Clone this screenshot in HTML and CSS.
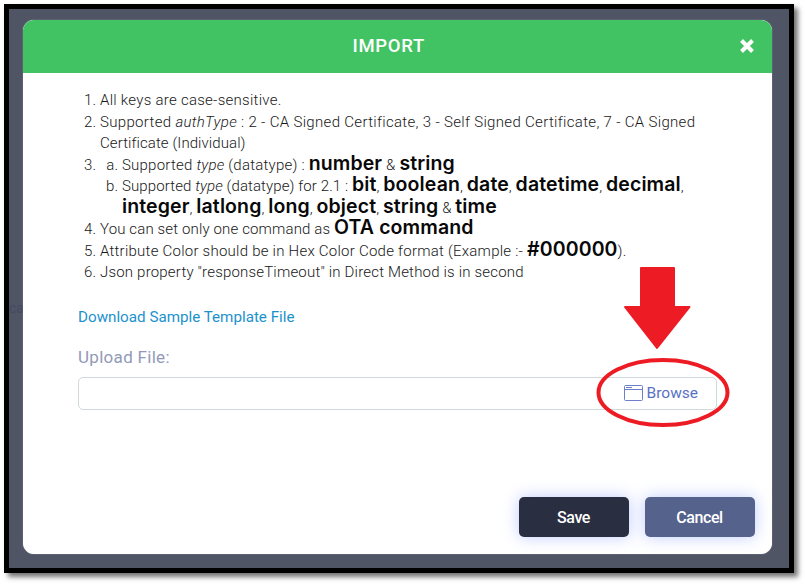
FILE: index.html
```html
<!DOCTYPE html>
<html lang="en">
<head>
<meta charset="utf-8">
<title>Import</title>
<link rel="stylesheet" href="styles.css">
</head>
<body>
<div class="frame">
  <span class="backdrop-text">ca</span>
  <div class="modal">
    <header class="modal-header">
      <h1>IMPORT</h1>
      <svg class="close" viewBox="0 0 16 16" width="16" height="16"><path d="M2.500 2.500 13.500 13.500M13.500 2.500 2.500 13.500"/></svg>
    </header>
    <div class="modal-body">
      <ol class="notes">
        <li><span class="num">1.</span><div class="l1">All keys are case-sensitive.</div></li>
        <li><span class="num">2.</span><div class="l2">Supported <i>authType</i> : 2 - CA Signed Certificate, 3 - Self Signed Certificate, 7 - CA Signed<br><span class="l3">Certificate (Individual)</span></div></li>
        <li><span class="num">3.</span>
          <ol class="sub">
            <li><span class="num">a.</span><div class="l4">Supported <i>type</i> (datatype) : <b>number</b> &amp; <b>string</b></div></li>
            <li><span class="num">b.</span><div class="l5">Supported <i>type</i> (datatype) for 2.1 : <b>bit</b>, <b>boolean</b>, <b>date</b>, <b>datetime</b>, <b>decimal</b>,<br><b>integer</b>, <b>latlong</b>, <b>long</b>, <b>object</b>, <b>string</b> &amp; <b>time</b></div></li>
          </ol>
        </li>
        <li><span class="num">4.</span><div class="l7">You can set only one command as <b>OTA command</b></div></li>
        <li><span class="num">5.</span><div class="l8">Attribute Color should be in Hex Color Code format (Example :- <b>#000000</b>).</div></li>
        <li><span class="num">6.</span><div class="l9">Json property "responseTimeout" in Direct Method is in second</div></li>
      </ol>
      <a class="download">Download Sample Template File</a>
      <label class="upload-label">Upload File:</label>
      <div class="file-input">
        <span class="browse">
          <svg viewBox="0 0 19 16" width="19" height="16"><path d="M.5 1.500q0-1 1-1h16q1 0 1 1v13q0 1-1 1h-16q-1 0-1-1zM.5 4.500h18M2 2.500h6"/></svg>
          <span>Browse</span>
        </span>
      </div>
    </div>
    <footer class="actions">
      <button class="btn save">Save</button>
      <button class="btn cancel">Cancel</button>
    </footer>
  </div>
</div>
<svg class="annotation" viewBox="0 0 140 164" width="140" height="164">
  <path class="arrow" d="M46 4h33v39h15.500L62 84 30 43h16z"/>
  <ellipse cx="68" cy="128.500" rx="64.500" ry="32.500"/>
</svg>
</body>
</html>
```
FILE: styles.css
```css
* { box-sizing: border-box; }
body { margin: 0; background: #fff; height: 584px; overflow: hidden; font-family: Roboto, sans-serif; }
.frame {
  position: relative; width: 790px; height: 569px; margin: 4px 0 0 4px;
  border: 5px solid #000; background: #505565; padding: 10.5px 0 0 14px;
  box-shadow: 4px 4px 5px rgba(0, 0, 0, .55);
}
.backdrop-text { position: absolute; left: 0; top: 291px; font-size: 14px; color: #454a5e; }
.modal {
  position: relative; width: 748.5px; height: 534.5px; background: #fff;
  border-radius: 11px; overflow: hidden; display: flex; flex-direction: column;
  box-shadow: 0 0 1px #c5c8d0;
}
.modal-header {
  height: 53.5px; flex: none; background: #41c363; color: #fff; padding: 0 17px;
  display: grid; grid-template-columns: 1fr auto 1fr; align-items: center;
}
h1 { grid-column: 2; margin: 0 17px 1px 0; font-size: 18.5px; font-weight: 500; letter-spacing: .7px; }
.close { justify-self: end; fill: none; stroke: #fff; stroke-width: 4; }
.modal-body { padding: 17px 53px 0 55px; flex: 1; display: flex; flex-direction: column; align-items: flex-start; }
ol { list-style: none; margin: 0; padding: 0; }
.notes { font-size: 15px; line-height: 21.5px; color: #181818; white-space: nowrap; font-weight: 300; }
.notes li { display: flex; }
.notes .num { width: 22px; padding-right: 4px; text-align: right; flex: none; }
.notes b { font: 600 19.5px/0 Inter, sans-serif; letter-spacing: .12px; color: #080808; }
.l1 { letter-spacing: .27px; }
.l2 { letter-spacing: .32px; }
.l3 { letter-spacing: .08px; }
.l4 { letter-spacing: .22px; }
.l5 { letter-spacing: .1px; }
.l7 { letter-spacing: .14px; }
.l8 { letter-spacing: .24px; }
.l9 { letter-spacing: .19px; }
.download { margin-top: 22px; font-size: 15.2px; line-height: 22px; color: #1b92cd; }
.upload-label { margin-top: 17px; font-size: 17px; line-height: 24px; letter-spacing: .3px; color: #929ab8; }
.file-input {
  margin-top: 8px; width: 639px; height: 33px; border: 1px solid #cfd9dc; border-radius: 5px;
  display: flex; justify-content: flex-end; align-items: center; padding: 0 18px 1px 0;
}
.browse { display: flex; align-items: center; gap: 4px; font-size: 15.5px; color: #5871c5; }
.browse svg { fill: none; stroke: #6c80c9; }
.actions { display: flex; justify-content: flex-end; gap: 16px; padding: 0 17px 17px 0; }
.btn {
  width: 110px; height: 40px; border: 0; border-radius: 5px; color: #fff; padding: 0;
  font: 500 16px Roboto, sans-serif; letter-spacing: -.4px; box-shadow: 0 0 15px rgba(90, 120, 255, .38);
}
.save { background: #292e41; }
.cancel { background: #55628b; }
.annotation { position: absolute; left: 595px; top: 264px; }
.annotation ellipse { fill: none; stroke: #ed1c24; stroke-width: 4; }
.arrow { fill: #ed1c24; stroke: #ed1c24; stroke-width: 2; stroke-linejoin: round; }
```
